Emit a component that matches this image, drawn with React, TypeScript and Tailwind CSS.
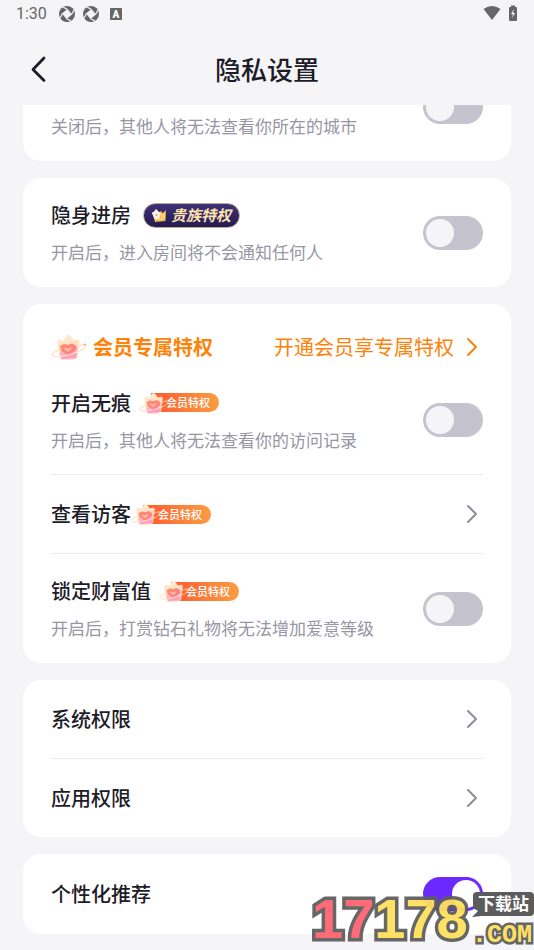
import { useState } from 'react';
import type { ReactNode } from 'react';

interface SettingRowProps {
  id: string;
  title?: string;
  description: string;
  badge?: ReactNode;
  divider?: boolean;
}

interface LinkRowProps {
  title: string;
  badge?: ReactNode;
  divider?: boolean;
}

function Switch({ id, label, initial = false }: { id: string; label: string; initial?: boolean }) {
  const [checked, setChecked] = useState(initial);

  return (
    <input
      id={id}
      type="checkbox"
      role="switch"
      aria-label={label}
      checked={checked}
      onChange={(e) => setChecked(e.target.checked)}
      className="flex h-[34px] w-[60px] shrink-0 cursor-pointer appearance-none items-center rounded-full bg-[#c5c3cd] px-[3px] before:block before:size-7 before:rounded-full before:bg-[#f5f5f8] checked:justify-end checked:bg-[#6c29ff] checked:before:bg-white"
    />
  );
}

function Chevron({ className }: { className: string }) {
  return (
    <svg viewBox="0 0 12 20" fill="none" stroke="currentColor" strokeWidth="2" strokeLinecap="round" strokeLinejoin="round" className={className} aria-hidden="true">
      <path d="M2 2l8 8-8 8" />
    </svg>
  );
}

function Crown({ className }: { className: string }) {
  return (
    <svg viewBox="0 0 36 26" fill="none" className={className} aria-hidden="true">
      <defs>
        <linearGradient id="crown-body" x1="0" y1="0" x2="0.2" y2="1">
          <stop offset="0" stopColor="#fff4da" />
          <stop offset="0.5" stopColor="#ffdcc4" />
          <stop offset="1" stopColor="#ff9fc0" />
        </linearGradient>
        <linearGradient id="crown-gem" x1="0" y1="0" x2="1" y2="1">
          <stop offset="0" stopColor="#ff8d62" />
          <stop offset="1" stopColor="#ff7d92" />
        </linearGradient>
      </defs>
      {/* orbit behind the crown */}
      <path d="M8 16C3 17.5 0.5 19.5 1 21c0.5 1.5 4 2 8 1.5M27 12.5c5-2.5 8-2.5 8-1 0 2-3 4.5-8 6.5" stroke="#ffd5a6" strokeWidth="1" />
      <path d="M7 7Q8 5.500 10 6.500l2.500 1.500 3-5.500q2-2 4 0l3 4.500 3.500-1q2.500-0.500 2 2l-1 7.500-1 7.500q-0.500 2-2.500 2l-12 0.500q-2 0-2.500-2.500z" fill="url(#crown-body)" stroke="#ffe3bd" strokeWidth="1" strokeLinejoin="round" />
      <path d="M9 12l4-2 4 1 4-1.500 4 2 0.500 4-8 6.500-7-5z" fill="url(#crown-gem)" />
      <path d="M13 13.500l4 1 4-1.500-1.500 3-2.500 2-3-2z" fill="#ffb9a8" />
      <path d="M9.500 18l7 5 8-5-0.500 5.500-13 0.500z" fill="#ff9cc4" opacity="0.75" />
      <path d="M2 22c7 1.500 17-1 25-4.500" stroke="#fff0d8" strokeWidth="1" />
      <circle cx="34" cy="10.5" r="1" fill="#ff9c55" />
    </svg>
  );
}

function MemberBadge() {
  return (
    <span className="flex items-center">
      <Crown className="relative z-[1] -mr-[18px] h-[22px] w-[30px]" />
      <span className="h-[19px] rounded-r-full bg-linear-to-r from-[#ff5630] to-[#fb9c42] pr-[9px] pl-[15px] text-[11px] leading-[18px] font-medium text-white">
        会员特权
      </span>
    </span>
  );
}

function NobleBadge() {
  return (
    <span className="flex h-[25px] items-center gap-1 rounded-full border border-[#b9a98c] bg-linear-to-b from-[#3f3178] to-[#241a52] pr-2 pl-[7px]">
      <svg viewBox="0 0 16 16" className="size-4" aria-hidden="true">
        <path d="M2 8l6-2 2-2 2 2 3-3-0.500 11L4 15z" fill="#f3b94f" />
        <path d="M1 6.500Q1 4.500 2.500 5L5 2l3 3q2 0 1.500 2.500L8 12l-4 0.500z" fill="#fff6dd" />
        <path d="M11 7v5l-3 1M13 6v6" stroke="#ffe9a0" fill="none" />
        <path d="M4 7h3l-1.500 2.500z" fill="#d8a4c0" />
      </svg>
      <span className="text-[15px] leading-5 font-bold text-[#ffe3ad] italic">贵族特权</span>
    </span>
  );
}

function Card({ children, className = '' }: { children: ReactNode; className?: string }) {
  return <section className={`rounded-[18px] bg-white px-7 ${className}`}>{children}</section>;
}

function SettingRow({ id, title, description, badge, divider }: SettingRowProps) {
  return (
    <div className={`flex h-[109px] items-center justify-between ${divider ? 'border-b border-[#ececf0]' : ''}`}>
      <label htmlFor={id}>
        <span className="flex h-7 items-center text-xl font-medium">
          {title}
          {badge}
        </span>
        <span className="mt-[11px] block text-[17px] leading-6 text-[#9796a3]">{description}</span>
      </label>
      <Switch id={id} label={title || description} />
    </div>
  );
}

function LinkRow({ title, badge, divider }: LinkRowProps) {
  return (
    <a href="#" className={`box-content flex h-[78px] items-center justify-between ${divider ? 'border-b border-[#ececf0]' : ''}`}>
      <span className="flex items-center text-xl font-medium">
        {title}
        {badge}
      </span>
      <Chevron className="mr-[5px] h-5 w-3 text-[#8d8c98]" />
    </a>
  );
}

function Shutter() {
  return (
    <svg viewBox="0 0 16 16" className="size-4" fill="none" aria-hidden="true">
      <circle cx="8" cy="8" r="8" fill="currentColor" />
      <path d="M8.5 3.5l4 5-5 4-4-5z" fill="#f5f5f8" stroke="#f5f5f8" strokeLinejoin="round" />
      <path d="M8.500 3.500L4 1M12.500 8.500L15 4M7.500 12.500L12 15M3.500 7.500L1 12" stroke="#f5f5f8" strokeWidth="1.2" />
    </svg>
  );
}

function StatusBar() {
  return (
    <div className="flex h-7 items-center justify-between px-4 text-[#666666]">
      <div className="flex items-center">
        <span className="w-[43px] font-[Roboto] text-base">1:30</span>
        <Shutter />
        <span className="w-2" />
        <Shutter />
        <span className="ml-[11px] flex size-3 items-center justify-center rounded-[1px] bg-[#666666] font-[Roboto] text-[10px] font-black text-white">
          A
        </span>
      </div>
      <div className="flex items-center gap-[7px] pb-[2px]">
        <svg viewBox="0 0 18 14" className="h-[14px] w-[18px]" fill="currentColor" aria-hidden="true">
          <path d="M0.5 3q8.5-6 17 0L9 14z" />
        </svg>
        <svg viewBox="0 0 10 16" className="h-4 w-[10px]" aria-hidden="true">
          <path d="M3 0.5h4v1.5h1q1 0 1 1v12q0 1-1 1H2q-1 0-1-1V3q0-1 1-1h1z" fill="currentColor" />
          <path d="M6 4L3 9h2l-1 4 3-5H5z" fill="white" />
        </svg>
      </div>
    </div>
  );
}

function Watermark() {
  return (
    <div className="pointer-events-none absolute right-0 bottom-0 h-[62px] w-[224px]" aria-hidden="true">
      <svg viewBox="0 0 224 62" className="size-full">
        <g fontWeight="700" stroke="#5f5f5f" strokeLinejoin="miter" paintOrder="stroke" opacity="0.95">
          <text x="2" y="50" fontSize="56" fontFamily="'Liberation Sans', sans-serif" strokeWidth="7" fill="#ff6470">
            17<tspan fill="#ffe05c">178</tspan>
          </text>
          <text x="162" y="54" fontSize="25" fontFamily="'Liberation Mono', monospace" strokeWidth="5" fill="#ffe05c">.COM</text>
        </g>
        <path d="M167 4h53q4 0 4 4v16q0 4-4 4h-48l-10 1 6-6-5-3V8q0-4 4-4z" fill="#5c5c5c" />
        <text x="168" y="22" fontSize="17" fontWeight="700" fill="white" fontFamily="'Noto Sans CJK SC', sans-serif">下载站</text>
      </svg>
    </div>
  );
}

export default function App() {
  return (
    <div className="relative min-h-screen overflow-hidden bg-[#f5f5f8] pb-4 font-['Noto_Sans_CJK_SC',sans-serif] text-[#1d1c28]">
      <header className="relative z-10 h-[105px] bg-[#f5f5f8]">
        <StatusBar />
        <div className="grid grid-cols-[1fr_auto_1fr] items-center pt-[21px]">
          <button type="button" aria-label="返回" className="ml-[30px] w-5">
            <svg viewBox="0 0 18 28" fill="none" stroke="currentColor" strokeWidth="2.8" strokeLinecap="round" strokeLinejoin="round" className="h-7 w-[18px]">
              <path d="M14 3L3 14.5l11 11" />
            </svg>
          </button>
          <h1 className="text-[26px] leading-10 font-medium">隐私设置</h1>
        </div>
      </header>

      <main className="-mt-[53px] flex flex-col gap-[17px] px-[23px]">
        <Card>
          <SettingRow id="city" description="关闭后，其他人将无法查看你所在的城市" />
        </Card>

        <Card>
          <SettingRow id="stealth" title="隐身进房" description="开启后，进入房间将不会通知任何人" badge={<span className="ml-3"><NobleBadge /></span>} />
        </Card>

        <Card>
          <div className="flex h-[62px] items-center justify-between pt-6 text-xl text-[#ff8208]">
            <h2 className="flex items-center gap-[6px] font-bold">
              <Crown className="h-[26px] w-9" />
              会员专属特权
            </h2>
            <a href="#" className="flex items-center gap-3">
              开通会员享专属特权
              <Chevron className="mr-[5px] h-5 w-3" />
            </a>
          </div>
          <SettingRow id="traceless" title="开启无痕" description="开启后，其他人将无法查看你的访问记录" badge={<span className="ml-2"><MemberBadge /></span>} divider />
          <LinkRow title="查看访客" badge={<MemberBadge />} divider />
          <SettingRow id="wealth" title="锁定财富值" description="开启后，打赏钻石礼物将无法增加爱意等级" badge={<span className="ml-2"><MemberBadge /></span>} />
        </Card>

        <Card>
          <LinkRow title="系统权限" divider />
          <LinkRow title="应用权限" />
        </Card>

        <Card className="flex h-20 items-center justify-between">
          <label htmlFor="recommend" className="text-xl font-medium">个性化推荐</label>
          <Switch id="recommend" label="个性化推荐" initial />
        </Card>
      </main>

      <Watermark />
    </div>
  );
}
